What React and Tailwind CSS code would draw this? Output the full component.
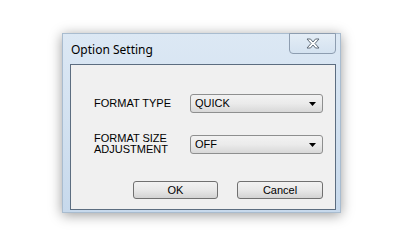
import { useState } from "react";

function Select({ value }) {
  return (
    <div className="flex items-center justify-between w-[133px] h-[19px] pl-[4px] pr-[6px] rounded-[3px] border border-[#8e8f8f] bg-gradient-to-b from-[#f2f2f2] via-[#ebebeb] to-[#d8d8d8] text-[11px] leading-none text-black">
      <span>{value}</span>
      <svg width="7" height="4" viewBox="0 0 7 4">
        <path d="M0 0 H7 L3.5 4 Z" fill="#000" />
      </svg>
    </div>
  );
}

function Button({ label, width }) {
  return (
    <button
      className={`flex items-center justify-center h-[18px] ${width} rounded-[3px] border border-[#707070] bg-gradient-to-b from-[#f2f2f2] via-[#e8e8e8] to-[#d3d3d3] text-[11px] leading-none text-black`}
    >
      {label}
    </button>
  );
}

export default function App() {
  const [type] = useState("QUICK");
  const [size] = useState("OFF");

  return (
    <div
      className="w-[403px] h-[244px] bg-white pt-[33px] pl-[62px] overflow-hidden"
      style={{ fontFamily: '"Liberation Sans", Arial, sans-serif' }}
    >
      <div className="flex flex-col w-[279px] h-[180px] pr-[4px] pl-[7px] pb-[2px] border border-[#a9bccf] bg-gradient-to-b from-[#dce8f4] via-[#d2e1f0] to-[#c7d9ec] shadow-[0_2px_12px_rgba(0,0,0,0.4)]">
        <div className="flex items-start justify-between h-[30px]">
          <span
            className="mt-[10px] ml-[1px] text-[12px] leading-none text-black"
            style={{ fontFamily: '"Noto Sans", "Open Sans", sans-serif' }}
          >
            Option Setting
          </span>
          <div className="flex items-center justify-center w-[47px] h-[21px] -mt-px rounded-b-[4px] border border-[#8d9db0] bg-gradient-to-b from-[#e4edf6] to-[#d4e2f0]">
            <svg width="14" height="11" viewBox="0 0 14 11">
              <path
                d="M1 1 H4.5 L7 4 L9.5 1 H13 L9 5.5 L13 10 H9.5 L7 7 L4.5 10 H1 L5 5.5 Z"
                fill="#fff"
                stroke="#5f6b78"
                strokeWidth="1"
                strokeLinejoin="round"
              />
            </svg>
          </div>
        </div>
        <div className="flex flex-col flex-1 border border-[#5c6d80] bg-[#f0f0f0] pl-[23px] pr-[12px]">
          <div className="flex items-center justify-between mt-[29px]">
            <span className="text-[11px] leading-none text-black">FORMAT TYPE</span>
            <Select value={type} />
          </div>
          <div className="flex items-center justify-between mt-[21px]">
            <span className="text-[11px] leading-[11px] text-black mt-[-1px]">
              FORMAT SIZE
              <br />
              ADJUSTMENT
            </span>
            <Select value={size} />
          </div>
          <div className="flex justify-end gap-[19px] mt-[26px]">
            <Button label="OK" width="w-[85px]" />
            <Button label="Cancel" width="w-[86px]" />
          </div>
        </div>
      </div>
    </div>
  );
}
